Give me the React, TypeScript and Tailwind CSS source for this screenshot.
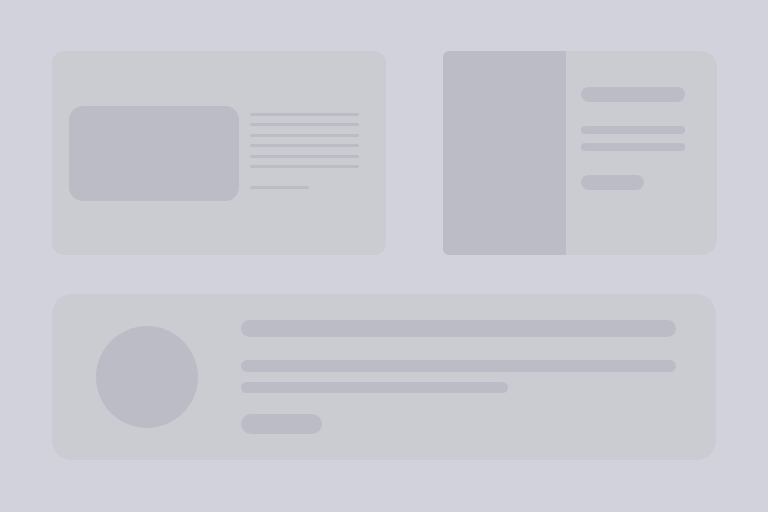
import React from "react";

export default function App() {
  const ph = "bg-[#bcbcc6]";
  return (
    <div className="w-[768px] h-[512px] bg-[#d2d2dc] pl-[52px] pt-[51px] overflow-hidden">
      <div className="flex gap-[57px]">
        {/* Card 1 */}
        <div className="w-[334px] h-[204px] rounded-xl bg-[#cbccd2] flex items-start pl-[17px] pt-[55px]">
          <div className={`w-[170px] h-[95px] rounded-[14px] ${ph}`} />
          <div className="ml-[11px] mt-[6.5px] w-[109px] flex flex-col">
            <div className={`h-[3px] rounded-full ${ph}`} />
            <div className={`h-[3px] mt-[7.5px] rounded-full ${ph}`} />
            <div className={`h-[3px] mt-[7.5px] rounded-full ${ph}`} />
            <div className={`h-[3px] mt-[7.5px] rounded-full ${ph}`} />
            <div className={`h-[3px] mt-[7.5px] rounded-full ${ph}`} />
            <div className={`h-[3px] mt-[7.5px] rounded-full ${ph}`} />
            <div className={`h-[3px] mt-[17.5px] w-[59px] rounded-full ${ph}`} />
          </div>
        </div>
        {/* Card 2 */}
        <div className="w-[274px] h-[204px] rounded-l-md rounded-r-2xl bg-[#cbccd2] flex">
          <div className={`w-[123px] h-full rounded-l-md ${ph}`} />
          <div className="ml-[15px] pt-[36px] w-[104px] flex flex-col">
            <div className={`h-[15px] rounded-full ${ph}`} />
            <div className={`h-[8px] mt-[24px] rounded-full ${ph}`} />
            <div className={`h-[8px] mt-[8.5px] rounded-full ${ph}`} />
            <div className={`h-[15px] w-[63px] mt-[24px] rounded-full ${ph}`} />
          </div>
        </div>
      </div>
      {/* Card 3 */}
      <div className="mt-[39px] w-[664px] h-[166px] rounded-[20px] bg-[#cbccd2] flex items-center pl-[44px]">
        <div className={`w-[102px] h-[102px] rounded-full ${ph}`} />
        <div className="ml-[43px] w-[435px] flex flex-col">
          <div className={`h-[17px] rounded-full ${ph}`} />
          <div className={`h-[12px] mt-[23px] rounded-full ${ph}`} />
          <div className={`h-[11px] mt-[10px] w-[267px] rounded-full ${ph}`} />
          <div className={`h-[20px] mt-[21px] w-[81px] rounded-full ${ph}`} />
        </div>
      </div>
    </div>
  );
}
